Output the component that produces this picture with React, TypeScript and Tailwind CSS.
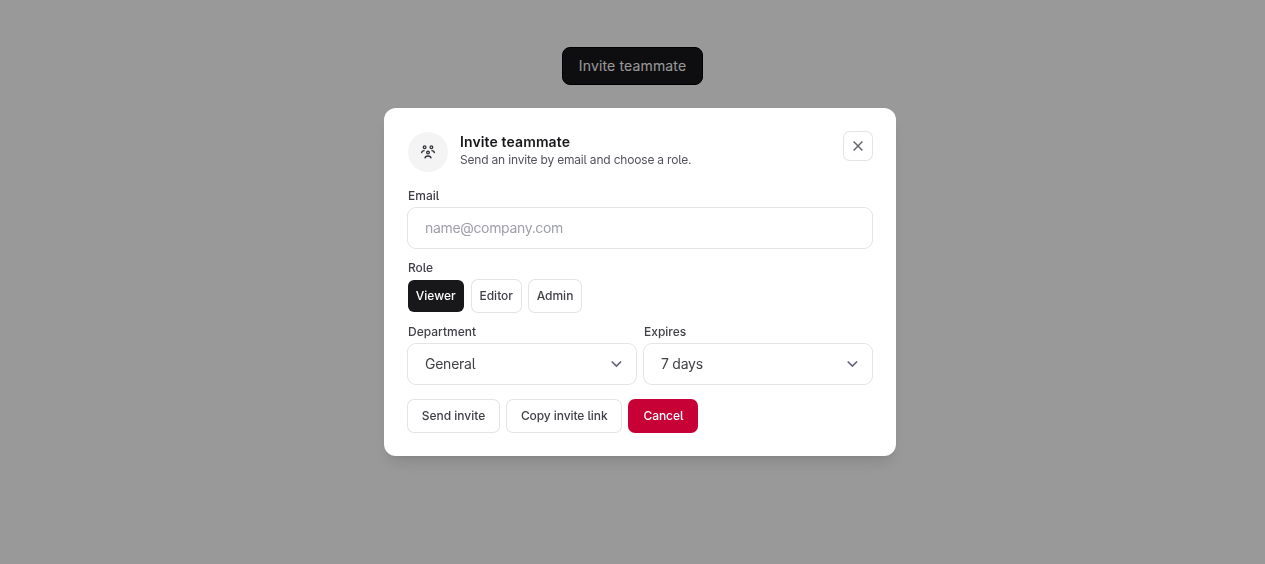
import type { ReactNode } from "react";

const ring = "shadow-[0_0_0_1px_#e4e4e7,0_1px_2px_rgba(0,0,0,0.02)]";

function Chevron() {
  return (
    <svg className="size-4" viewBox="0 0 16 16" fill="none" stroke="#62627a" strokeWidth="1.7" strokeLinejoin="miter">
      <path d="M3.7 5.5 8.4 10l4.7-4.5" />
    </svg>
  );
}

function TeamIcon() {
  return (
    <svg className="size-4" viewBox="0 0 16 16" fill="none" stroke="#34343c" strokeWidth="1.3">
      <circle cx="4.6" cy="3.3" r="1.35" />
      <circle cx="11.4" cy="3.3" r="1.35" />
      <circle cx="8" cy="8.6" r="1.35" />
      <path d="M1.5 9.2c.2-1.7 1.2-2.6 3.1-2.5M14.5 9.2c-.2-1.7-1.2-2.6-3.1-2.5M4.9 14.4c.1-1.5 1.3-2.4 3.1-2.4s3 .9 3.1 2.4" />
    </svg>
  );
}

function Label({ children }: { children: ReactNode }) {
  return <span className="block h-4 text-xs leading-4 font-medium text-[#3f3f46]">{children}</span>;
}

function Select({ label, value }: { label: string; value: string }) {
  return (
    <div className="flex-1">
      <Label>{label}</Label>
      <button className={`mt-1 flex h-10 w-full items-center justify-between rounded-lg bg-white pr-3 pl-[17px] text-sm tracking-[-0.25px] text-[#3f3f46] ${ring}`}>
        {value}
        <Chevron />
      </button>
    </div>
  );
}

export default function App() {
  return (
    <div className="min-h-screen bg-white font-['Inter',sans-serif] [font-feature-settings:'cv05']">
      <div className="flex justify-center pt-[47px]">
        <button className="h-[38px] w-[141px] rounded-lg border border-black bg-[#18181b] text-sm tracking-[0.15px] text-white">
          Invite teammate
        </button>
      </div>
      <div className="fixed inset-y-0 left-0 flex w-[1280px] items-center justify-center bg-black/40">
        <section role="dialog" className="h-[348px] w-[512px] rounded-xl bg-white p-6 shadow-[0_10px_15px_-3px_rgba(0,0,0,0.1),0_4px_6px_-4px_rgba(0,0,0,0.1)]">
          <header className="flex h-10 items-start">
            <div className="flex size-10 items-center justify-center rounded-full bg-[#f4f4f5]">
              <TeamIcon />
            </div>
            <div className="ml-3 flex-1">
              <h2 className="text-sm leading-5 font-semibold tracking-[0.12px] text-[#18181b]">Invite teammate</h2>
              <p className="text-xs leading-4 tracking-[-0.19px] text-[#52525c]">Send an invite by email and choose a role.</p>
            </div>
            <button aria-label="Close" className={`flex size-7 items-center justify-center rounded-md ${ring}`}>
              <svg className="size-4" viewBox="0 0 16 16" fill="none" stroke="#62626b" strokeWidth="1.4">
                <path d="m3.6 3.6 8.8 8.8m0-8.8-8.8 8.8" />
              </svg>
            </button>
          </header>
          <div className="mt-4">
            <Label>Email</Label>
            <input placeholder="name@company.com" className={`mt-1 block h-10 w-full rounded-lg px-[17px] pb-px text-sm tracking-[-0.33px] outline-none placeholder:text-[#9f9fa9] ${ring}`} />
          </div>
          <div className="mt-3">
            <Label>Role</Label>
            <div className="mt-1 flex h-8 text-xs font-medium text-[#3f3f46]">
              <button className="w-[55.5px] rounded-md bg-[#18181b] text-white">Viewer</button>
              <button className={`ml-2 w-[49.5px] rounded-md bg-white ${ring}`}>Editor</button>
              <button className={`ml-2 w-[52px] rounded-md bg-white ${ring}`}>Admin</button>
            </div>
          </div>
          <div className="mt-3 flex gap-2">
            <Select label="Department" value="General" />
            <Select label="Expires" value="7 days" />
          </div>
          <footer className="mt-4 flex h-8 text-xs font-medium text-[#3f3f46]">
            <button className={`w-[91px] rounded-md bg-white ${ring}`}>Send invite</button>
            <button className={`ml-2 w-[114.4px] rounded-md bg-white tracking-[-0.08px] ${ring}`}>Copy invite link</button>
            <button className="ml-2 w-[68px] rounded-md bg-[#c70036] tracking-[-0.05px] text-white shadow-[0_0_0_1px_#c70036]">Cancel</button>
          </footer>
        </section>
      </div>
    </div>
  );
}
